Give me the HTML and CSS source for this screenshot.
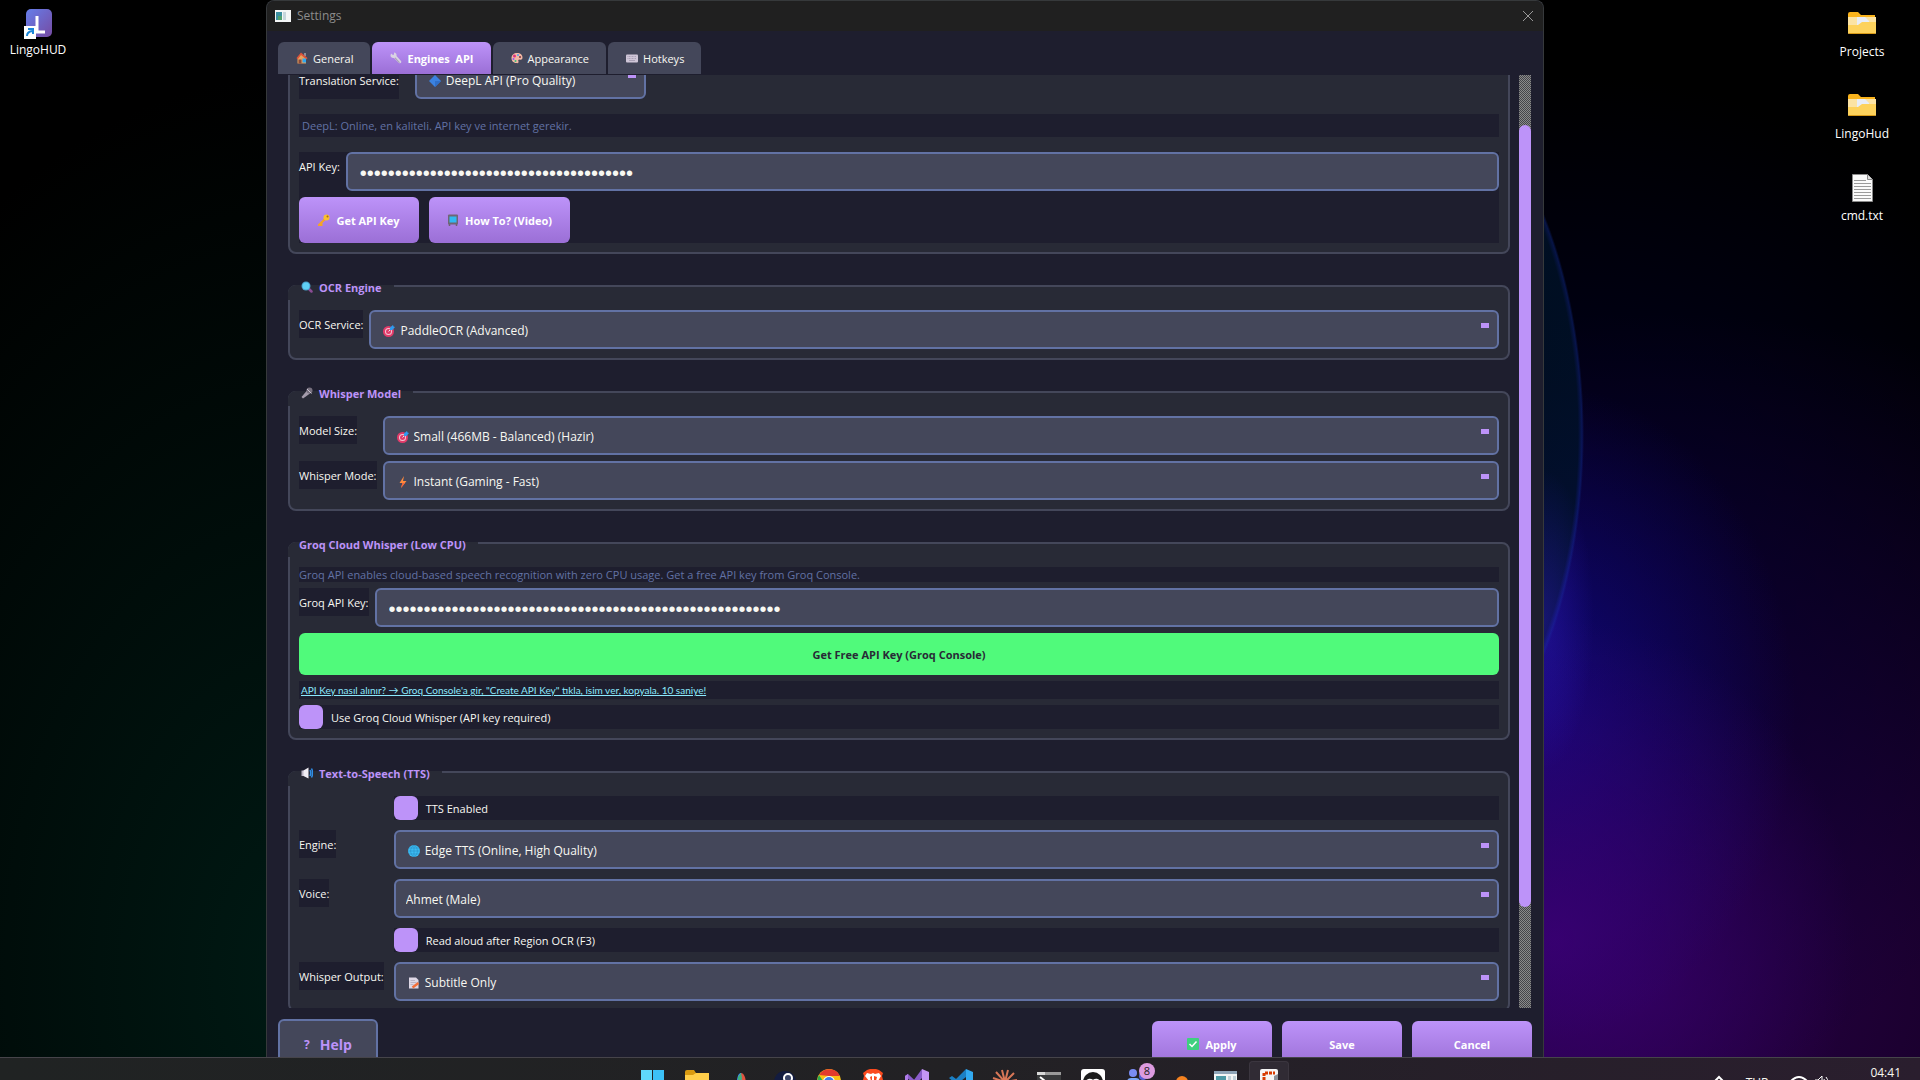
FILE: index.html
```
<!DOCTYPE html>
<html lang="en">
<head>
  <meta charset="UTF-8">
  <meta name="viewport" content="width=device-width, initial-scale=1">
  <title>Settings</title>
  <link rel="stylesheet" href="styles.css">
</head>
<body>

  <!-- Icon set -->
  <svg class="sprite" aria-hidden="true">
    <symbol id="i-house" viewBox="0 0 24 24">
      <path fill="#8d8d99" d="M16 2h4v6h-4z"/>
      <path fill="#e8a25c" d="M3 11 11 4l9 7v12H3z"/>
      <path fill="#d9533b" d="M1 12 10 1l13 11-2 3-11-9-7 9z"/>
      <path fill="#8a4b3c" d="M5 15h6v8H5z"/>
      <path fill="#2fa8f0" d="M13 13h7v8h-7z"/>
    </symbol>
    <symbol id="i-wrench" viewBox="0 0 24 24">
      <path fill="#d9d2e3" d="M2 3l4 3 2-1V1c3 0 6 3 5 7l9 10c2 3-1 6-4 4L8 12c-4 1-7-2-7-5z"/>
      <path fill="#a9a2b8" d="M9 12l2-1 9 10-2 1z"/>
    </symbol>
    <symbol id="i-palette" viewBox="0 0 24 24">
      <path fill="#f3b8a4" d="M12 2c7 0 11 4 11 9 0 4-3 5-6 4-3 0-3 2-2 4s-1 4-4 3C4 22 1 17 1 12 1 6 6 2 12 2z"/>
      <circle cx="7" cy="8" r="3" fill="#e0337c"/>
      <circle cx="14" cy="6" r="2" fill="#4aa3f0"/>
      <circle cx="5" cy="14" r="2" fill="#8b5cf6"/>
      <circle cx="9" cy="18" r="2" fill="#35c07a"/>
      <circle cx="18" cy="10" r="2" fill="#7a3340"/>
    </symbol>
    <symbol id="i-keyboard" viewBox="0 0 24 24">
      <rect x="0" y="5" width="24" height="16" rx="2" fill="#cfc6d8"/>
      <path stroke="#aaa1b6" stroke-width="2" stroke-dasharray="2 1" d="M3 9h18M3 13h18"/>
      <path stroke="#aaa1b6" stroke-width="2" d="M6 17h12"/>
    </symbol>
    <symbol id="i-diamond" viewBox="0 0 24 24">
      <path fill="#3b82e0" d="M12 0 24 12 12 24 0 12z"/>
      <path fill="#2f6fc9" d="M12 12h12L12 24z"/>
    </symbol>
    <symbol id="i-key" viewBox="0 0 24 24">
      <path stroke="#f5a524" stroke-width="4" fill="none" d="M13 11 2 22h5v-4"/>
      <circle cx="17" cy="7" r="6" fill="#fbc02d"/>
      <circle cx="19" cy="5" r="2" fill="#a8691a"/>
    </symbol>
    <symbol id="i-tv" viewBox="0 0 24 24">
      <path stroke="#6b6270" stroke-width="3" d="M5 20v4M19 20v4"/>
      <rect x="2" y="1" width="20" height="20" rx="2" fill="#6f6674"/>
      <rect x="5" y="5" width="14" height="12" fill="#31b8f2"/>
    </symbol>
    <symbol id="i-search" viewBox="0 0 24 24">
      <path stroke="#8a4c94" stroke-width="5" stroke-linecap="round" d="m16 16 5 5"/>
      <circle cx="10" cy="10" r="9" fill="#4a9fc9"/>
      <circle cx="10" cy="10" r="7" fill="#5fd0f5"/>
    </symbol>
    <symbol id="i-target" viewBox="0 0 24 24">
      <circle cx="11" cy="13" r="11" fill="#e23b6a"/>
      <circle cx="11" cy="13" r="7" fill="#f4c6d4"/>
      <circle cx="11" cy="13" r="5" fill="#e23b6a"/>
      <path stroke="#dfe9f5" stroke-width="2" d="m11 13 7-7"/>
      <path fill="#2f9bf0" d="m14 5 6-5 1 3 3 1-5 6h-5z"/>
    </symbol>
    <symbol id="i-mic" viewBox="0 0 24 24">
      <path fill="#a39bab" d="M1 20 12 7l6 6L4 23z"/>
      <circle cx="17" cy="7" r="6" fill="#77707e"/>
      <path stroke="#c9c2d0" stroke-width="2" d="m12 4 9 9"/>
    </symbol>
    <symbol id="i-bolt" viewBox="0 0 24 24">
      <path fill="#ff8a3d" d="M14 0 5 14h6L8 24l11-14h-7z"/>
      <path fill="#f2603c" d="m8 24 3-10h5z"/>
    </symbol>
    <symbol id="i-speaker" viewBox="0 0 24 24">
      <path fill="#bdb6c6" d="M1 7h6v11H1z"/>
      <path fill="#f2eef5" d="M5 7 15 1v22L5 18z"/>
      <path stroke="#2f8fe8" stroke-width="3" fill="none" d="M18 6c2 4 2 8 0 12M21 3c3 6 3 12 0 18"/>
    </symbol>
    <symbol id="i-globe" viewBox="0 0 24 24">
      <circle cx="12" cy="12" r="12" fill="#3cbcf2"/>
      <path stroke="#2484bd" stroke-width="1" fill="none" d="M0 12h24M2 6h20M2 18h20M12 0v24M12 0c-9 6-9 18 0 24M12 0c9 6 9 18 0 24"/>
    </symbol>
    <symbol id="i-memo" viewBox="0 0 24 24">
      <path fill="#ded8e6" d="M2 1h14l5 5v17H2z"/>
      <path stroke="#9a93a6" stroke-width="1" d="M5 7h9M5 11h12M5 15h6"/>
      <path stroke="#f2703c" stroke-width="5" d="m9 21 12-9"/>
    </symbol>
    <symbol id="i-check" viewBox="0 0 24 24">
      <rect width="24" height="24" rx="2" fill="#3fd07f"/>
      <path stroke="#fff" stroke-width="3" fill="none" d="m5 12 5 5 9-10"/>
    </symbol>
    <symbol id="i-folder" viewBox="0 0 28 24">
      <path fill="#f9b31c" d="M0 3q0-2 2-2h8l3 3h14v18H0z"/>
      <path fill="#fbe3a4" d="M0 6h28v8H0z"/>
      <path fill="#e8edf7" d="M9 6h8l4 4v5H9z"/>
      <path fill="#fdd25c" d="M0 14h10l4-3h14v11q0 1-1 1H1q-1 0-1-1z"/>
      <path fill="#d99a17" d="M1 22h26v1H1z"/>
    </symbol>
  </svg>

  <div class="desktop">
    <div class="shortcuts left">
      <a class="shortcut" href="#">
        <svg width="28" height="32" viewBox="0 0 28 32" aria-hidden="true">
          <defs>
            <linearGradient id="lg" x1="0" y1="0" x2="1" y2="1">
              <stop offset="0" stop-color="#667eea"/>
              <stop offset="1" stop-color="#764ba2"/>
            </linearGradient>
          </defs>
          <rect x="2" y="1" width="26" height="28" rx="5" fill="url(#lg)"/>
          <path stroke="#fff" stroke-width="3" fill="none" d="M13 8v16h8"/>
          <rect x="0" y="18" width="12" height="13" fill="#fff"/>
          <path stroke="#1a86d8" stroke-width="2" fill="none" d="M3 28q0-4 5-5M4 21h5v5"/>
        </svg>
        LingoHUD
      </a>
    </div>

    <!-- Settings window -->
    <main class="window">
      <header class="titlebar">
        <svg width="16" height="14" viewBox="0 0 16 14" aria-hidden="true">
          <path fill="#f4f6f6" d="M0 1h16v12H0z"/>
          <path fill="#3b8fa0" d="M1 3h6v8H1z"/>
          <path fill="#4f9f6c" d="M3 7h4v4H3z"/>
          <path fill="#c6d6dc" d="M8 3h3v8H8z"/>
        </svg>
        <h1>Settings</h1>
        <button class="close" aria-label="Close">
          <svg width="12" height="12" viewBox="0 0 12 12"><path stroke="#999" fill="none" d="m1 1 10 10M11 1 1 11"/></svg>
        </button>
      </header>

      <nav class="tabs">
        <button class="tab"><svg class="icon"><use href="#i-house"/></svg>General</button>
        <button class="tab active"><svg class="icon"><use href="#i-wrench"/></svg>Engines&nbsp; API</button>
        <button class="tab"><svg class="icon"><use href="#i-palette"/></svg>Appearance</button>
        <button class="tab"><svg class="icon"><use href="#i-keyboard"/></svg>Hotkeys</button>
      </nav>

      <div class="scroll-area">
        <div class="groups">

          <section class="group scrolled">
            <div class="row wide-gap">
              <label class="tall" for="translation">Translation Service:</label>
              <div class="select-box fit">
                <svg class="icon"><use href="#i-diamond"/></svg>
                <select id="translation" class="field with-icon"><option>DeepL API (Pro Quality)</option></select>
              </div>
            </div>
            <p class="description">DeepL: Online, en kaliteli. API key ve internet gerekir.</p>
            <div class="api-panel">
              <div class="row">
                <label for="apiKey">API Key:</label>
                <input id="apiKey" class="field secret" type="password" value="000000000000000000000000000000000000000">
              </div>
              <div class="actions">
                <button class="btn"><svg class="icon"><use href="#i-key"/></svg>Get API Key</button>
                <button class="btn"><svg class="icon"><use href="#i-tv"/></svg>How To? (Video)</button>
              </div>
            </div>
          </section>

          <section class="group">
            <h2><svg class="icon"><use href="#i-search"/></svg>OCR Engine</h2>
            <div class="row">
              <label for="ocr">OCR Service:</label>
              <div class="select-box">
                <svg class="icon"><use href="#i-target"/></svg>
                <select id="ocr" class="field with-icon"><option>PaddleOCR (Advanced)</option></select>
              </div>
            </div>
          </section>

          <section class="group">
            <h2><svg class="icon"><use href="#i-mic"/></svg>Whisper Model</h2>
            <div class="form-grid">
              <label for="modelSize">Model Size:</label>
              <div class="select-box">
                <svg class="icon"><use href="#i-target"/></svg>
                <select id="modelSize" class="field with-icon"><option>Small (466MB - Balanced) (Hazir)</option></select>
              </div>
              <label for="whisperMode">Whisper Mode:</label>
              <div class="select-box">
                <svg class="icon"><use href="#i-bolt"/></svg>
                <select id="whisperMode" class="field with-icon"><option>Instant (Gaming - Fast)</option></select>
              </div>
            </div>
          </section>

          <section class="group">
            <h2>Groq Cloud Whisper (Low CPU)</h2>
            <div class="stack">
              <p class="note">Groq API enables cloud-based speech recognition with zero CPU usage. Get a free API key from Groq Console.</p>
              <div class="row">
                <label for="groqKey">Groq API Key:</label>
                <input id="groqKey" class="field secret" type="password" value="00000000000000000000000000000000000000000000000000000000">
              </div>
              <button class="btn green">Get Free API Key (Groq Console)</button>
              <p class="help-link"><a href="#">API Key nasıl alınır? → Groq Console'a gir, "Create API Key" tıkla, isim ver, kopyala. 10 saniye!</a></p>
              <div class="check-row">
                <input type="checkbox" id="useGroq">
                <label for="useGroq">Use Groq Cloud Whisper (API key required)</label>
              </div>
            </div>
          </section>

          <section class="group">
            <h2><svg class="icon"><use href="#i-speaker"/></svg>Text-to-Speech (TTS)</h2>
            <div class="form-grid roomy">
              <div class="check-row">
                <input type="checkbox" id="ttsEnabled">
                <label for="ttsEnabled">TTS Enabled</label>
              </div>
              <label for="engine">Engine:</label>
              <div class="select-box">
                <svg class="icon"><use href="#i-globe"/></svg>
                <select id="engine" class="field with-icon"><option>Edge TTS (Online, High Quality)</option></select>
              </div>
              <label for="voice">Voice:</label>
              <div class="select-box">
                <select id="voice" class="field"><option>Ahmet (Male)</option></select>
              </div>
              <div class="check-row">
                <input type="checkbox" id="readAloud">
                <label for="readAloud">Read aloud after Region OCR (F3)</label>
              </div>
              <label for="output">Whisper Output:</label>
              <div class="select-box">
                <svg class="icon"><use href="#i-memo"/></svg>
                <select id="output" class="field with-icon"><option>Subtitle Only</option></select>
              </div>
            </div>
          </section>

        </div>
        <div class="scrollbar"><div class="thumb"></div></div>
      </div>

      <footer class="footer">
        <button class="btn help"><span>?</span>Help</button>
        <div class="footer-actions">
          <button class="btn"><svg class="icon"><use href="#i-check"/></svg>Apply</button>
          <button class="btn">Save</button>
          <button class="btn">Cancel</button>
        </div>
      </footer>
    </main>

    <div class="shortcuts right">
      <a class="shortcut" href="#"><svg width="28" height="32" viewBox="0 0 28 32"><use href="#i-folder" y="1" width="28" height="24"/></svg>Projects</a>
      <a class="shortcut" href="#"><svg width="28" height="32" viewBox="0 0 28 32"><use href="#i-folder" y="1" width="28" height="24"/></svg>LingoHud</a>
      <a class="shortcut" href="#">
        <svg width="28" height="32" viewBox="0 0 28 32">
          <path fill="#fafafa" stroke="#8a8a8a" d="M4.500.5h15l5 5v22h-20z"/>
          <path fill="#ddd" stroke="#8a8a8a" d="M19.500.5v5h5"/>
          <path stroke="#9a9a9a" d="M6 6.500h12M6 9.500h17M6 12.500h17M6 15.500h17M6 18.500h17M6 21.500h17M6 24.500h17"/>
        </svg>
        cmd.txt
      </a>
    </div>
  </div>

  <!-- Taskbar, its lower half runs off the screen -->
  <div class="taskbar">
    <div class="apps">
      <button class="app" aria-label="Start">
        <svg viewBox="0 0 24 24"><path fill="#5fd8fb" d="M0 0h11v11H0z"/><path fill="#3cc1f7" d="M12 0h11v11H12zM0 12h11v11H0z"/><path fill="#1fa4ee" d="M12 12h11v11H12z"/></svg>
      </button>
      <button class="app" aria-label="Files">
        <svg viewBox="0 0 24 24"><path fill="#d99a10" d="M0 2q0-2 2-2h7l2 3v4H0z"/><path fill="#ffce4a" d="M0 5h8l3-2h13v19H0z"/></svg>
      </button>
      <button class="app" aria-label="Copilot">
        <svg viewBox="0 0 24 24"><path fill="#3f8ef0" d="M8 12c0-6 2-9 4-9l3 4 2 12H8z"/><path fill="#e0533f" d="M12 3c3 0 5 5 5 12h-4z"/><path fill="#3fb27a" d="M9 7l3-4 1 6-4 3z"/></svg>
      </button>
      <button class="app" aria-label="Steam">
        <svg viewBox="0 0 24 24"><circle cx="12" cy="12" r="11" fill="#131c40"/><circle cx="15" cy="8" r="4" fill="#394468" stroke="#fff" stroke-width="2"/><path stroke="#fff" stroke-width="3" d="m13 12-5 5"/></svg>
      </button>
      <button class="app" aria-label="Chrome">
        <svg viewBox="0 0 24 24"><circle cx="12" cy="11" r="12" fill="#fbc116"/><path fill="#e33b2e" d="M2 5a12 12 0 0 1 21 1H12z"/><path fill="#2da94f" d="M2 5l6 9 2 9A12 12 0 0 1 2 5z"/><circle cx="12" cy="12" r="6" fill="#fff"/><circle cx="12" cy="12" r="5" fill="#3b7ded"/></svg>
      </button>
      <button class="app" aria-label="Brave">
        <svg viewBox="0 0 24 24"><path fill="#fb4a1e" d="m6 0 3-1h6l3 1 4 3-1 3 1 4-10 14L2 10l1-4-1-3z"/><path fill="#fff" d="M6 3l4 1 2-1 2 1 4-1 2 3-3 5h-2l1-4-3-1v4h-2V6L9 7l1 4H8L4 6z"/></svg>
      </button>
      <button class="app" aria-label="Visual Studio">
        <svg viewBox="0 0 24 24"><path fill="#8a5cc9" d="m0 6 3-2 15 14v4z"/><path fill="#b07ce8" d="M0 6l3-2v14l-3-2z"/><path fill="#8a5cc9" d="M3 18 17-1v9L6 19z"/><path fill="#c595f5" d="m17-1 7 3v19l-7 3z"/></svg>
      </button>
      <button class="app" aria-label="VS Code">
        <svg viewBox="0 0 24 24"><path fill="#1b7fc4" d="M0 8l3-2 15 11v6zM3 18l-3-2L17-1v8z"/><path fill="#32a9f0" d="m17-1 7 3v19l-7 3z"/></svg>
      </button>
      <button class="app" aria-label="Claude">
        <svg viewBox="0 0 24 24"><path stroke="#d97757" stroke-width="2" d="M12 12 9 0M12 12l3-12M12 12 3 2M12 12l9-9M12 12 0 8M12 12l12-2M12 12 2 18M12 12l10 7"/></svg>
      </button>
      <button class="app" aria-label="Terminal">
        <svg viewBox="0 0 24 24"><path fill="#38393b" d="M0 2h24v20H0z"/><path fill="#9a9a9a" d="M0 2h24v3H0z"/><path fill="#d8d8d8" d="M0 2h8v3H0z"/><path stroke="#fff" stroke-width="2" fill="none" d="m3 7 5 4-5 4"/></svg>
      </button>
      <button class="app" aria-label="Assistant">
        <svg viewBox="0 0 24 24"><rect y="-1" width="24" height="24" rx="3" fill="#fff"/><circle cx="12" cy="12" r="10" fill="#1c1c1c"/><path stroke="#fff" stroke-width="2" fill="none" d="M5 12q3-4 7-1 4-3 7 1"/></svg>
      </button>
      <button class="app" aria-label="Teams">
        <svg viewBox="0 0 24 24"><circle cx="8" cy="3" r="4" fill="#7a8cf5"/><rect x="2" y="8" width="13" height="14" rx="4" fill="#7aa7fa"/><circle cx="18" cy="6" r="4" fill="#5560d8"/></svg>
        <span class="badge">8</span>
      </button>
      <button class="app" aria-label="Cloud">
        <svg viewBox="0 0 24 24"><circle cx="13" cy="12" r="6" fill="#f58220"/><circle cx="6" cy="14" r="4" fill="#d96a12"/></svg>
      </button>
      <button class="app" aria-label="LingoHUD">
        <svg viewBox="0 0 24 24"><path fill="#f4f6f6" d="M1 1h23v20H1z"/><path fill="#8fa5b8" d="M1 1h23v3H1z"/><path fill="#4d9aa6" d="M3 6h10v10H3z"/><path fill="#c3d3da" d="M15 6h3v10h-3zM20 6h3v10h-3z"/></svg>
      </button>
      <button class="app current" aria-label="Snipping Tool">
        <svg viewBox="0 0 24 24"><rect x="3" y="-1" width="18" height="24" rx="2" fill="#f5f5f5"/><path stroke="#d83b01" stroke-width="3" stroke-dasharray="3 1" fill="none" d="M7 14V3h11"/><path fill="#8b9199" d="M17 6l4-2v16h-4z"/></svg>
      </button>
    </div>
    <div class="tray">
      <svg width="10" height="10" viewBox="0 0 10 10"><path stroke="#fff" stroke-width="2" fill="none" d="m1 6 4-4 4 4"/></svg>
      <span>TUR</span>
      <svg width="44" height="14" viewBox="0 0 44 14"><path stroke="#fff" stroke-width="2" fill="none" d="M1 6q8-8 16 0M4 9q5-5 10 0"/><path stroke="#fff" fill="none" d="M25 5h3l4-4v12l-4-4h-3zM34 4q2 3 0 6M36 2q4 5 0 10"/></svg>
      <time>04:41</time>
    </div>
  </div>

</body>
</html>
```
FILE: styles.css
```
* {
  box-sizing: border-box;
}

body {
  margin: 0;
  height: 100vh;
  overflow: hidden;
  display: flex;
  flex-direction: column;
  font-family: 'Open Sans', 'Noto Sans', sans-serif;
  font-size: 11px;
  line-height: 16px;
  color: #f8f8f2;
  background:
    radial-gradient(ellipse 300px 320px at 81% 87%, rgba(62, 0, 120, 0.8), transparent),
    radial-gradient(ellipse 260px 330px at 80% 66%, rgba(20, 10, 150, 0.7), transparent),
    radial-gradient(ellipse 520px 520px at 82% 55%, rgba(0, 0, 60, 0.6), transparent),
    radial-gradient(ellipse 860px 680px at 86% 92%, #280046, transparent),
    radial-gradient(ellipse 600px 900px at 16% 90%, #001a14, transparent),
    #000;
}

h1, h2, p {
  margin: 0;
  font-size: 11px;
}

button, input, select {
  font-family: inherit;
  font-size: 11px;
  color: inherit;
  margin: 0;
}

button {
  border: none;
  background: none;
  padding: 0;
  cursor: pointer;
}

.sprite {
  position: absolute;
  width: 0;
  height: 0;
}

.icon {
  width: 12px;
  height: 12px;
  flex: none;
}

/* Desktop */
.desktop {
  flex: 1;
  min-height: 0;
  display: grid;
  grid-template-columns: 266px 1fr 376px;
}

.shortcuts {
  display: flex;
  flex-direction: column;
  gap: 32px;
  padding-top: 8px;
}

.shortcuts.right {
  align-items: flex-end;
  padding-top: 10px;
  padding-right: 20px;
  /* edge of the glowing petal */
  background:
    radial-gradient(ellipse 50px 150px at 0 620px, rgba(50, 30, 200, 0.4), transparent),
    radial-gradient(ellipse 200px 370px at -160px 435px, rgba(0, 16, 28, 0.8) 0, rgba(0, 18, 40, 0.8) 97%, rgba(14, 40, 130, 0.5) 99%, transparent 100%);
}

.shortcut {
  width: 76px;
  display: flex;
  flex-direction: column;
  align-items: center;
  gap: 2px;
  font-size: 12px;
  color: #fff;
  text-decoration: none;
}

/* Window */
.window {
  min-height: 0;
  overflow: hidden;
  display: flex;
  flex-direction: column;
  background: #1e1e2e;
  border: 1px solid #36393b;
  border-bottom: none;
  border-radius: 8px 8px 0 0;
}

.titlebar {
  height: 30px;
  flex: none;
  display: flex;
  align-items: center;
  gap: 6px;
  padding: 0 9px 1px 8px;
  background: #202020;
}

.titlebar h1 {
  flex: 1;
  font-size: 12px;
  font-weight: normal;
  color: #8c8c8c;
}

.close {
  display: flex;
}

.tabs {
  display: flex;
  gap: 2px;
  padding: 11px 11px 0;
}

.tab {
  height: 32px;
  display: flex;
  align-items: center;
  gap: 5px;
  padding: 0 17px 0 18px;
  background: #44475a;
  border-radius: 6px 6px 0 0;
}

.tab.active {
  color: #fff;
  font-weight: bold;
  background: linear-gradient(#bd93f9, #9b6fd6);
}

.scroll-area {
  flex: 1;
  min-height: 0;
  margin-top: 1px;
  padding: 0 12px 0 21px;
  display: flex;
  gap: 9px;
  overflow: hidden;
}

.groups {
  flex: 1;
  display: flex;
  flex-direction: column;
  gap: 31px;
}

.scrollbar {
  width: 12px;
  padding: 50px 0 101px;
  background: repeating-conic-gradient(#8a8a8a 0 25%, #44454a 0 50%) 0 0 / 2px 2px;
}

.thumb {
  height: 100%;
  border-radius: 6px;
  background: #bd93f9;
}

/* Group boxes */
.group {
  border: 2px solid #44475a;
  border-radius: 8px;
  background: #282a36;
  padding: 0 9px 9px;
}

.group.scrolled {
  margin-top: -40px;
  padding-top: 23px;
}

.group h2 {
  width: fit-content;
  height: 15px;
  line-height: 6px;
  margin: -2px 0 10px -11px;
  padding: 0 12px 0 11px;
  display: flex;
  gap: 6px;
  color: #bd93f9;
  background: #282a36;
  border-radius: 8px 0 0 0;
}

.group h2 .icon {
  margin: -4px 0 0 2px;
}

.row {
  display: flex;
  gap: 6px;
}

.row.wide-gap {
  gap: 16px;
}

.form-grid {
  display: grid;
  grid-template-columns: auto 1fr;
  gap: 6px;
}

.form-grid.roomy {
  gap: 10px;
}

.form-grid > label {
  justify-self: start;
}

.form-grid .check-row {
  grid-column: 2;
}

.stack {
  display: flex;
  flex-direction: column;
  gap: 6px;
}

label {
  height: 28px;
  line-height: 30px;
  background: #1e1e2e;
  white-space: nowrap;
}

label.tall {
  height: 39px;
  line-height: 42px;
}

.field {
  width: 100%;
  height: 39px;
  padding: 2px 10px 0;
  font-size: 12px;
  color: #f8f8f2;
  background: #44475a;
  border: 2px solid #6272a4;
  border-radius: 6px;
}

select.field {
  appearance: none;
  background: linear-gradient(#bd93f9, #bd93f9) right 8px top 11px / 8px 5px no-repeat #44475a;
}

select.with-icon {
  padding-left: 29px;
}

.secret {
  flex: 1;
  padding: 4px 12px 0;
  font-family: 'Liberation Sans', sans-serif;
  font-size: 20px;
}

.select-box {
  position: relative;
  flex: 1;
}

.select-box.fit {
  flex: none;
  width: 231px;
}

/* icon drawn over the select */
.select-box .icon {
  position: absolute;
  left: 14px;
  top: 15px;
  pointer-events: none;
}

.description {
  margin: 15px 0;
  padding: 3px;
  line-height: 17px;
  color: #6272a4;
  background: #1e1e2e;
}

.note {
  line-height: 15px;
  color: #6272a4;
  background: #1e1e2e;
}

.api-panel {
  display: flex;
  flex-direction: column;
  gap: 6px;
  background: #1e1e2e;
}

.actions {
  display: flex;
  gap: 10px;
}

.btn {
  height: 46px;
  min-width: 120px;
  padding: 0 18px;
  display: flex;
  align-items: center;
  justify-content: center;
  gap: 6px;
  color: #fff;
  font-weight: bold;
  background: linear-gradient(#bd93f9, #9b6fd6);
  border-radius: 6px;
}

.btn.green {
  height: 42px;
  color: #282a36;
  background: #50fa7b;
}

.help-link {
  padding: 0 2px;
  font-family: Lato, sans-serif;
  font-size: 10px;
  line-height: 18px;
  background: #1e1e2e;
}

.help-link a {
  color: #8be9fd;
}

.check-row {
  display: flex;
  align-items: center;
  gap: 8px;
  background: #1e1e2e;
}

.check-row input {
  appearance: none;
  width: 24px;
  height: 24px;
  background: #bd93f9;
  border-radius: 6px;
}

.check-row label {
  height: 24px;
  line-height: 25px;
}

/* Footer */
.footer {
  height: 49px;
  flex: none;
  display: flex;
  justify-content: space-between;
  padding: 11px 11px 0;
}

.footer-actions {
  display: flex;
  gap: 10px;
  padding-top: 2px;
}

.btn.help {
  height: 50px;
  min-width: 100px;
  gap: 10px;
  font-size: 14px;
  color: #bd93f9;
  background: #44475a;
  border: 2px solid #6272a4;
}

.btn.help span {
  font-size: 12px;
}

/* Taskbar */
.taskbar {
  height: 23px;
  flex: none;
  display: grid;
  grid-template-columns: 1fr auto 1fr;
  border-top: 1px solid #46444a;
  background: linear-gradient(90deg, #202323, #222124 50%, #2a1e2e);
}

.apps {
  grid-column: 2;
  display: flex;
  gap: 4px;
  padding: 3px 0 0 2px;
}

.app {
  position: relative;
  width: 40px;
  height: 40px;
  padding: 9px 8px;
}

.app.current {
  background: #302b34;
  border-radius: 4px;
  box-shadow: inset 0 0 0 1px #3b363f;
}

.app svg {
  display: block;
  width: 24px;
  height: 24px;
  overflow: visible;
}

.badge {
  position: absolute;
  left: 22px;
  top: 2px;
  width: 16px;
  height: 16px;
  line-height: 16px;
  border-radius: 50%;
  color: #222;
  background: #dd9be0;
}

.tray {
  display: flex;
  justify-content: flex-end;
  gap: 22px;
  padding: 7px 19px 0 0;
  font-size: 12px;
}

.tray svg, .tray span {
  margin-top: 10px;
}

.tray time {
  margin-left: 14px;
}
```
